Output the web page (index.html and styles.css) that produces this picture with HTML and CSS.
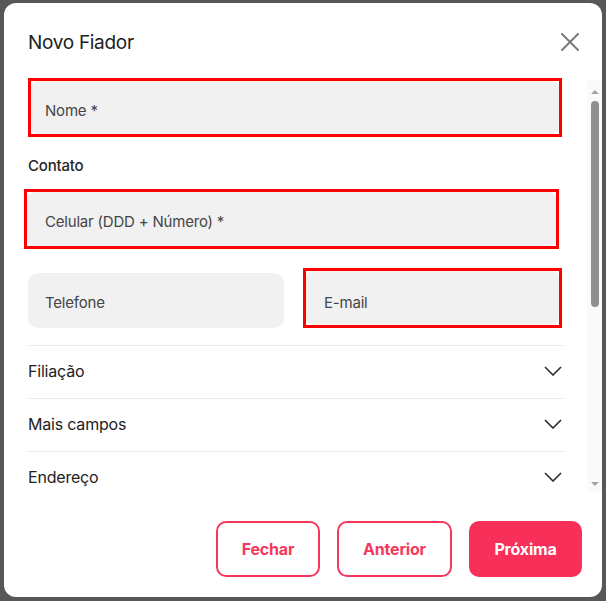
FILE: index.html
```html
<!DOCTYPE html>
<html lang="pt">
<head>
<meta charset="utf-8">
<link rel="stylesheet" href="styles.css">
</head>
<body>
<div class="overlay">
  <div class="modal">
    <div class="header">
      <h1 class="title">Novo Fiador</h1>
      <button class="close" aria-label="Fechar">
        <svg width="18" height="18" viewBox="0 0 18 18"><path d="M1 1L17 17M17 1L1 17" stroke="#7a7a7a" stroke-width="2" fill="none" stroke-linecap="round"/></svg>
      </button>
    </div>
    <div class="body">
      <div class="scroll">
        <div class="mark mark-nome"><div class="field">Nome *</div></div>
        <div class="section-label">Contato</div>
        <div class="mark mark-cel"><div class="field">Celular (DDD + Número) *</div></div>
        <div class="pair">
          <div class="field field-plain">Telefone</div>
          <div class="mark mark-email"><div class="field">E-mail</div></div>
        </div>
        <div class="acc">
          <div class="acc-row"><span>Filiação</span><svg class="chev" width="18" height="10" viewBox="0 0 18 10"><path d="M1 1L9 9L17 1" stroke="#2b2b2b" stroke-width="1.6" fill="none"/></svg></div>
          <div class="acc-row"><span>Mais campos</span><svg class="chev" width="18" height="10" viewBox="0 0 18 10"><path d="M1 1L9 9L17 1" stroke="#2b2b2b" stroke-width="1.6" fill="none"/></svg></div>
          <div class="acc-row"><span>Endereço</span><svg class="chev" width="18" height="10" viewBox="0 0 18 10"><path d="M1 1L9 9L17 1" stroke="#2b2b2b" stroke-width="1.6" fill="none"/></svg></div>
        </div>
      </div>
      <div class="sbar">
        <div class="arrow-up"></div>
        <div class="thumb"></div>
        <div class="track-rest"></div>
        <div class="arrow-down"></div>
      </div>
    </div>
    <div class="footer">
      <button class="btn btn-outline btn-fechar">Fechar</button>
      <button class="btn btn-outline btn-anterior">Anterior</button>
      <button class="btn btn-fill">Próxima</button>
    </div>
  </div>
</div>
</body>
</html>
```
FILE: styles.css
```css
* { box-sizing: border-box; }
html, body { margin: 0; padding: 0; }
body {
  width: 606px;
  height: 601px;
  background: #575757;
  font-family: Inter, "Noto Sans", sans-serif;
  overflow: hidden;
}
.overlay {
  padding: 3px 4px 0 4px;
}
.modal {
  width: 598px;
  height: 594px;
  background: #fff;
  border-radius: 12px;
  display: flex;
  flex-direction: column;
}
.header {
  height: 75px;
  display: flex;
  align-items: center;
  justify-content: space-between;
  padding: 3px 23px 0 24px;
}
.title {
  margin: 0;
  font-size: 19px;
  font-weight: 400;
  color: #202020;
  letter-spacing: -0.3px;
}
.close {
  background: none;
  border: 0;
  padding: 0;
  width: 18px;
  height: 18px;
  display: flex;
}
.body {
  height: 414px;
  display: flex;
  padding-left: 20px;
}
.scroll {
  width: 540px;
  padding-left: 4px;
  overflow: hidden;
  display: flex;
  flex-direction: column;
}
.mark {
  border: 3px solid #ff0000;
  flex-shrink: 0;
}
.field {
  background: #f1f1f1;
  border-radius: 9px;
  height: 53px;
  display: flex;
  align-items: center;
  padding-left: 14px;
  padding-top: 5px;
  font-size: 15px;
  color: #454545;
  letter-spacing: -0.2px;
}
.mark .field { border-radius: 7px; }
.mark-nome { width: 534px; height: 59px; }
.mark-cel { width: 535px; height: 60px; margin-left: -4px; margin-top: 14px; }
.mark-cel .field { height: 54px; padding-left: 18px; }
.section-label {
  margin-top: 18px;
  height: 20px;
  line-height: 20px;
  font-size: 15px;
  font-weight: 500;
  color: #262626;
  letter-spacing: -0.2px;
  padding-top: 1px;
}
.pair {
  margin-top: 19px;
  display: flex;
  align-items: flex-end;
  justify-content: space-between;
  width: 534px;
}
.field-plain {
  width: 256px;
  height: 55px;
  border-radius: 10px;
  padding-left: 17px;
  padding-top: 3px;
}
.mark-email { width: 259px; height: 60px; }
.mark-email .field { height: 54px; padding-left: 18px; padding-top: 8px; }
.acc {
  margin-top: 17px;
}
.acc-row {
  height: 53px;
  border-top: 1px solid #ececec;
  display: flex;
  align-items: center;
  justify-content: space-between;
  padding-right: 2px;
  padding-bottom: 2px;
  font-size: 16px;
  color: #222;
  letter-spacing: -0.2px;
}
.acc-row span { margin-bottom: 1px; }
.sbar {
  margin-left: 23px;
  width: 15px;
  background: #fafafa;
  display: flex;
  flex-direction: column;
  align-items: center;
  padding-top: 10px;
  height: 412px;
  margin-top: 2px;
}
.arrow-up {
  width: 0; height: 0;
  border-left: 4px solid transparent;
  border-right: 4px solid transparent;
  border-bottom: 4px solid #a3a3a3;
}
.thumb {
  margin-top: 7px;
  width: 8px;
  height: 206px;
  border-radius: 4px;
  background: #8f8f8f;
}
.track-rest { flex: 1; }
.arrow-down {
  width: 0; height: 0;
  border-left: 4px solid transparent;
  border-right: 4px solid transparent;
  border-top: 4px solid #a3a3a3;
  margin-bottom: 6px;
}
.footer {
  flex: 1;
  display: flex;
  justify-content: flex-end;
  align-items: flex-start;
  gap: 17px;
  padding: 29px 20px 0 0;
}
.btn {
  height: 56px;
  border-radius: 10px;
  font-family: Inter, "Noto Sans", sans-serif;
  font-size: 16px;
  font-weight: 700;
  letter-spacing: -0.2px;
  cursor: pointer;
}
.btn-outline {
  background: #fff;
  border: 2px solid #f5375d;
  color: #f5375d;
}
.btn-fechar { width: 104px; }
.btn-anterior { width: 115px; }
.btn-fill {
  width: 113px;
  background: #f82f58;
  border: 0;
  color: #fff;
}
```
